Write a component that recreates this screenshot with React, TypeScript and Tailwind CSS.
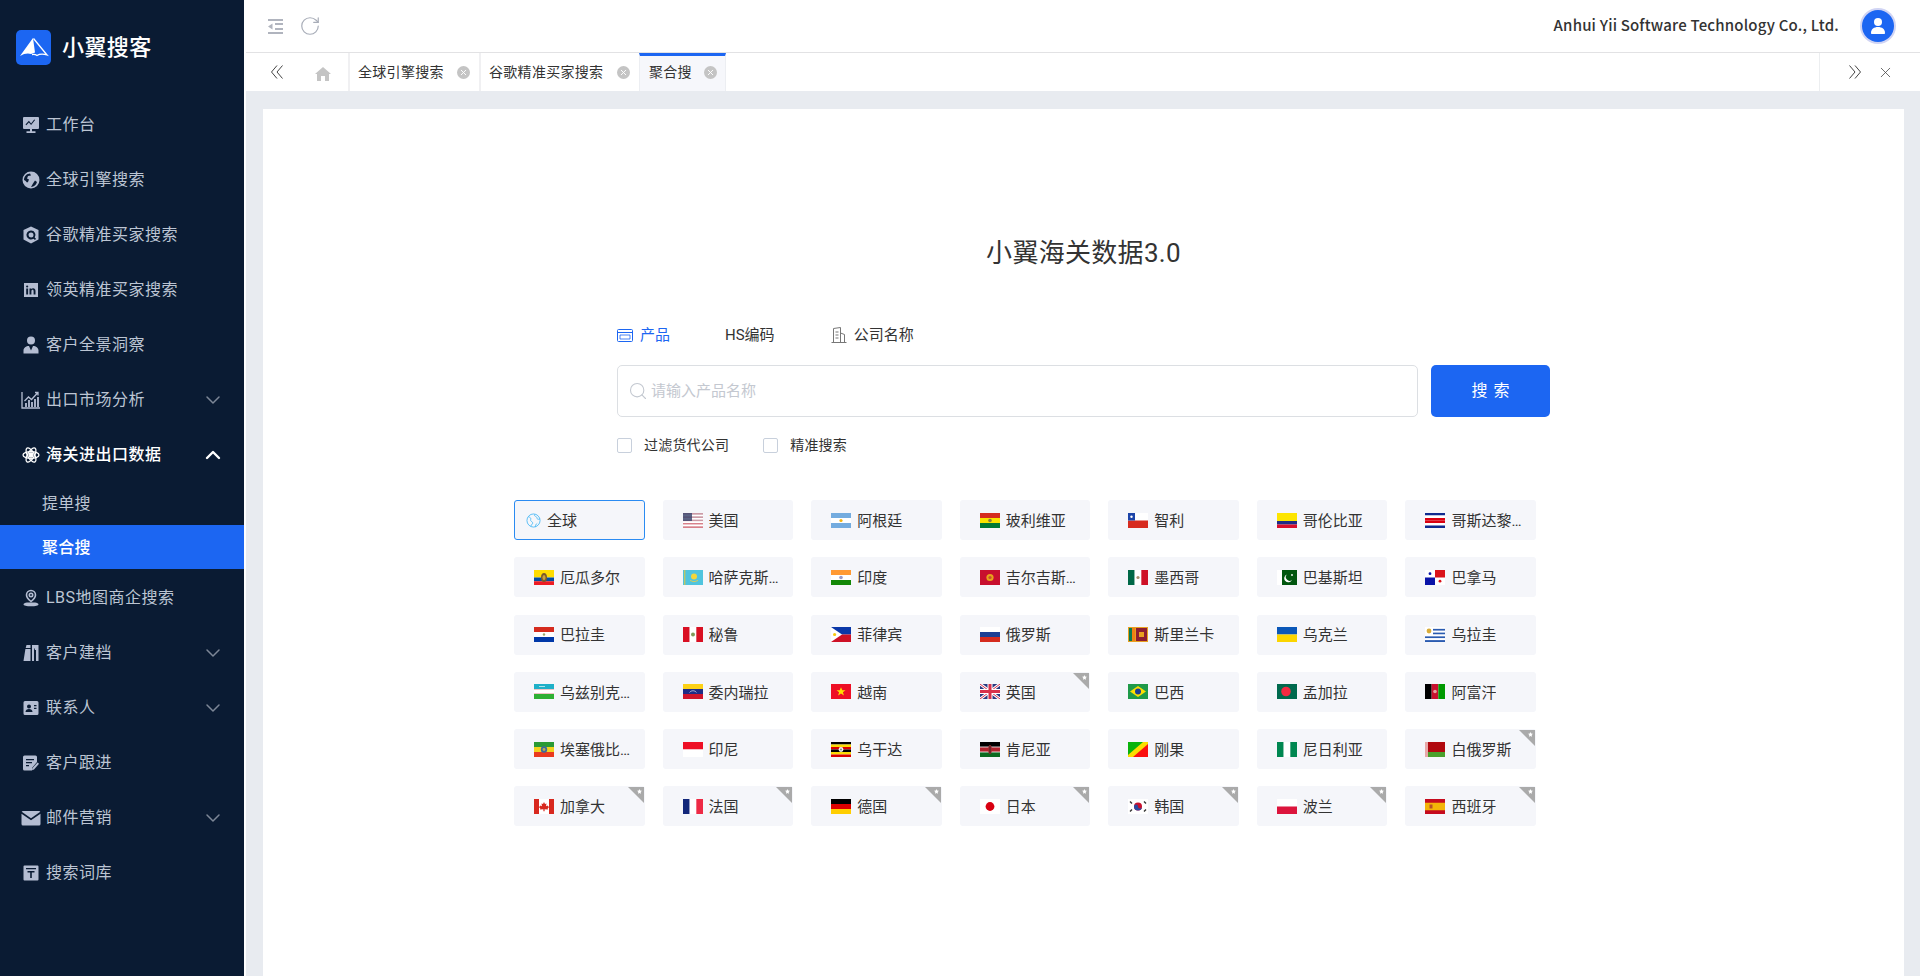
import { ChevronDown, ChevronUp, RotateCw, Search, X } from "lucide-react";
import type { ReactNode } from "react";

const FONT = "[font-family:Roboto,'Noto_Sans_CJK_SC',sans-serif]";

function Bands({ colors, vertical }: { colors: string[]; vertical?: boolean }) {
  const size = (vertical ? 20 : 15) / colors.length;
  return (
    <>
      {colors.map((c, i) =>
        vertical ? (
          <rect key={i} x={i * size} y="0" width={size} height="15" fill={c} />
        ) : (
          <rect key={i} x="0" y={i * size} width="20" height={size} fill={c} />
        ),
      )}
    </>
  );
}

const flags: Record<string, ReactNode> = {
  美国: (
    <>
      <Bands colors={["#d8808a", "#fff", "#d8808a", "#fff", "#d8808a", "#fff", "#d8808a", "#fff", "#d8808a"]} />
      <rect width="20" height="8" fill="#3f4b72" opacity="0.85" />
      <rect x="9" width="11" height="8" fill="#e9aeb3" opacity="0.8" />
      <rect y="1.7" x="9" width="11" height="1.6" fill="#fff" />
      <rect y="5" x="9" width="11" height="1.6" fill="#fff" />
    </>
  ),
  阿根廷: (
    <>
      <Bands colors={["#74acdf", "#fff", "#74acdf"]} />
      <circle cx="10" cy="7.5" r="1.6" fill="#f6b40e" />
    </>
  ),
  玻利维亚: (
    <>
      <Bands colors={["#d52b1e", "#f9e300", "#007934"]} />
      <circle cx="10" cy="7.5" r="1.8" fill="#8a7a3a" />
    </>
  ),
  智利: (
    <>
      <rect width="20" height="7.5" fill="#fff" />
      <rect y="7.5" width="20" height="7.5" fill="#d72b1f" />
      <rect width="7" height="7.5" fill="#1c44a8" />
      <circle cx="3.5" cy="3.7" r="1.2" fill="#fff" />
    </>
  ),
  哥伦比亚: (
    <>
      <rect width="20" height="8" fill="#fde500" />
      <rect y="8" width="20" height="3.5" fill="#1f2c86" />
      <rect y="11.5" width="20" height="3.5" fill="#d90f2c" />
    </>
  ),
  哥斯达黎加: <Bands colors={["#0f2a8f", "#fff", "#da0010", "#da0010", "#fff", "#0f2a8f"]} />,
  厄瓜多尔: (
    <>
      <rect width="20" height="7.5" fill="#ffdd00" />
      <rect y="7.5" width="20" height="3.75" fill="#034ea2" />
      <rect y="11.25" width="20" height="3.75" fill="#ed1c24" />
      <ellipse cx="10" cy="7.5" rx="3" ry="4.5" fill="#7a5a2a" />
      <ellipse cx="10" cy="7.5" rx="1.5" ry="2.5" fill="#c9a23c" />
    </>
  ),
  哈萨克斯坦: (
    <>
      <rect width="20" height="15" fill="#4fc4de" />
      <rect x="1" width="1.4" height="15" fill="#b9c76a" />
      <circle cx="11" cy="6.5" r="3" fill="#f2d63a" />
      <path d="M7 10.5q4 2.5 8 0" stroke="#d9cf58" fill="none" />
    </>
  ),
  印度: (
    <>
      <Bands colors={["#ff9933", "#fff", "#138808"]} />
      <circle cx="10" cy="7.5" r="1.8" fill="#9a9ac8" />
    </>
  ),
  吉尔吉斯斯坦: (
    <>
      <rect width="20" height="15" fill="#c8102e" />
      <circle cx="10" cy="7.5" r="3.6" fill="#e9a21a" />
      <circle cx="10" cy="7.5" r="1.6" fill="#c8502e" />
    </>
  ),
  墨西哥: (
    <>
      <Bands vertical colors={["#006847", "#fff", "#ce1126"]} />
      <circle cx="10" cy="7.5" r="1.6" fill="#a89070" />
    </>
  ),
  巴基斯坦: (
    <>
      <rect width="20" height="15" fill="#01560f" />
      <rect width="5" height="15" fill="#fff" />
      <path d="M10 4.5a4 4 0 1 0 5 5.2a3.3 3.3 0 1 1 -5 -5.2z" fill="#fff" />
      <circle cx="15" cy="5" r="0.9" fill="#fff" />
    </>
  ),
  巴拿马: (
    <>
      <rect width="20" height="15" fill="#fff" />
      <rect x="10" width="10" height="7.5" fill="#da121a" />
      <rect y="7.5" width="10" height="7.5" fill="#0a14a8" />
      <circle cx="5" cy="3.7" r="1.4" fill="#0a14a8" />
      <circle cx="15" cy="11.2" r="1.4" fill="#da121a" />
    </>
  ),
  巴拉圭: (
    <>
      <Bands colors={["#d52b1e", "#fff", "#0038a8"]} />
      <circle cx="10" cy="7.5" r="1.2" fill="#9aa86a" />
    </>
  ),
  秘鲁: (
    <>
      <Bands vertical colors={["#d91023", "#fff", "#d91023"]} />
      <circle cx="10" cy="7.5" r="2" fill="#7f9a5a" />
    </>
  ),
  菲律宾: (
    <>
      <rect width="20" height="7.5" fill="#0b38a8" />
      <rect y="7.5" width="20" height="7.5" fill="#ce1126" />
      <path d="M0 0L11 7.5L0 15z" fill="#fff" />
      <circle cx="3.6" cy="7.5" r="1.6" fill="#f6c90e" />
    </>
  ),
  俄罗斯: <Bands colors={["#fff", "#1c3f94", "#d52b1e"]} />,
  斯里兰卡: (
    <>
      <rect width="20" height="15" fill="#e8a020" />
      <rect x="1" y="1" width="3" height="13" fill="#0a7a50" />
      <rect x="4" y="1" width="3" height="13" fill="#f07f14" />
      <rect x="8" y="1" width="11" height="13" fill="#8d1d31" />
      <rect x="11" y="5" width="5" height="5" fill="#e8a020" />
    </>
  ),
  乌克兰: <Bands colors={["#0a57b8", "#fbd500"]} />,
  乌拉圭: (
    <>
      <Bands colors={["#fff", "#2a5bb0", "#fff", "#2a5bb0", "#fff", "#2a5bb0", "#fff", "#2a5bb0"]} />
      <rect width="8" height="8" fill="#fff" />
      <circle cx="4" cy="4" r="2.4" fill="#d8ac3a" />
    </>
  ),
  乌兹别克斯坦: (
    <>
      <rect width="20" height="5" fill="#1eb0c8" />
      <rect y="5" width="20" height="5" fill="#fff" />
      <rect y="5" width="20" height="0.5" fill="#d88" />
      <rect y="9.5" width="20" height="0.5" fill="#d88" />
      <rect y="10" width="20" height="5" fill="#2eb034" />
      <rect x="5" y="2" width="6" height="0.8" fill="#fff" opacity="0.8" />
    </>
  ),
  委内瑞拉: (
    <>
      <Bands colors={["#fcd116", "#1f2c86", "#cf142b"]} />
      <path d="M6.5 8.5a4 3.5 0 0 1 7 0" stroke="#dde" strokeWidth="0.7" fill="none" />
    </>
  ),
  越南: (
    <>
      <rect width="20" height="15" fill="#ee0f25" />
      <path d="M10 3.2l1.3 3h3.2l-2.6 2 1 3.3-2.9-2-2.9 2 1-3.3-2.6-2h3.2z" fill="#ffe000" />
    </>
  ),
  英国: (
    <>
      <rect width="20" height="15" fill="#2b3a80" />
      <path d="M0 0L20 15M20 0L0 15" stroke="#fff" strokeWidth="3" />
      <path d="M0 0L20 15M20 0L0 15" stroke="#d8304a" strokeWidth="1" />
      <path d="M10 0V15M0 7.5H20" stroke="#fff" strokeWidth="5" />
      <path d="M10 0V15M0 7.5H20" stroke="#d8304a" strokeWidth="3" />
    </>
  ),
  巴西: (
    <>
      <rect width="20" height="15" fill="#1f9a49" />
      <path d="M10 2L18 7.5L10 13L2 7.5z" fill="#fedf00" />
      <circle cx="10" cy="7.5" r="3" fill="#1c3f94" />
    </>
  ),
  孟加拉: (
    <>
      <rect width="20" height="15" fill="#006a4e" />
      <circle cx="9" cy="7.5" r="4.8" fill="#f42a41" />
    </>
  ),
  阿富汗: (
    <>
      <Bands vertical colors={["#000", "#c8102e", "#009a00"]} />
      <circle cx="10" cy="7.5" r="1.8" fill="#e8a0a0" />
    </>
  ),
  埃塞俄比亚: (
    <>
      <Bands colors={["#2a9a34", "#f2d21e", "#ea3a1e"]} />
      <circle cx="10" cy="7.5" r="3.2" fill="#3d6a9a" />
      <circle cx="10" cy="7.5" r="1.4" fill="#b8b050" />
    </>
  ),
  印尼: <Bands colors={["#ee0f25", "#fff"]} />,
  乌干达: (
    <>
      <Bands colors={["#000", "#fcdc04", "#d90000", "#000", "#fcdc04", "#d90000"]} />
      <circle cx="10" cy="7.5" r="2.4" fill="#f2f2f2" />
      <circle cx="10" cy="7.5" r="0.9" fill="#777" />
    </>
  ),
  肯尼亚: (
    <>
      <rect width="20" height="5" fill="#000" />
      <rect y="5" width="20" height="5" fill="#b0212c" />
      <rect y="10" width="20" height="5" fill="#0a6a20" />
      <rect y="4.6" width="20" height="0.8" fill="#fff" />
      <rect y="9.6" width="20" height="0.8" fill="#fff" />
      <ellipse cx="10" cy="7.5" rx="1.8" ry="4.5" fill="#a32a30" />
      <rect x="9.6" y="3.5" width="0.8" height="8" fill="#222" />
    </>
  ),
  刚果: (
    <>
      <rect width="20" height="15" fill="#fbde00" />
      <path d="M0 0H15L0 13z" fill="#09b30c" />
      <path d="M20 15H5L20 2z" fill="#fb0f0f" />
    </>
  ),
  尼日利亚: <Bands vertical colors={["#008751", "#fff", "#008751"]} />,
  白俄罗斯: (
    <>
      <rect width="20" height="10" fill="#b0090f" />
      <rect y="10" width="20" height="5" fill="#4aa02c" />
      <rect width="3" height="15" fill="#e8a8a8" />
    </>
  ),
  加拿大: (
    <>
      <Bands vertical colors={["#d8281e", "#fff", "#fff", "#d8281e"]} />
      <path d="M10 3l1 2 1.5-.6-.5 2.8 1.7-.8.4 1.2 1.2.2-1.6 1.7.3 1-3.4-.3v2h-1.2v-2l-3.4.3.3-1-1.6-1.7 1.2-.2.4-1.2 1.7.8-.5-2.8 1.5.6z" fill="#d8281e" />
    </>
  ),
  法国: <Bands vertical colors={["#12277a", "#fff", "#ee2a45"]} />,
  德国: <Bands colors={["#000", "#dd0000", "#ffce00"]} />,
  日本: (
    <>
      <rect width="20" height="15" fill="#fff" />
      <circle cx="10" cy="7.5" r="4.4" fill="#d80010" />
    </>
  ),
  韩国: (
    <>
      <rect width="20" height="15" fill="#fff" />
      <circle cx="10" cy="7.5" r="4" fill="#c8102e" />
      <path d="M6 7.5a2 2 0 0 1 4 0a2 2 0 0 0 4 0a4 4 0 0 1 -8 0z" fill="#2a4aa0" />
      <path d="M2 2.5l2 2M16 2.5l2 2M2 12.5l2-2M16 12.5l2-2" stroke="#333" strokeWidth="1.4" />
    </>
  ),
  波兰: <Bands colors={["#fff", "#dc143c"]} />,
  西班牙: (
    <>
      <rect width="20" height="15" fill="#c60b1e" />
      <rect y="3.75" width="20" height="7.5" fill="#f3b408" />
      <rect x="4.5" y="5.5" width="3" height="4" fill="#b8502a" />
    </>
  ),
};

const countries = [
  "美国", "阿根廷", "玻利维亚", "智利", "哥伦比亚", "哥斯达黎加",
  "厄瓜多尔", "哈萨克斯坦", "印度", "吉尔吉斯斯坦", "墨西哥", "巴基斯坦", "巴拿马",
  "巴拉圭", "秘鲁", "菲律宾", "俄罗斯", "斯里兰卡", "乌克兰", "乌拉圭",
  "乌兹别克斯坦", "委内瑞拉", "越南", "英国", "巴西", "孟加拉", "阿富汗",
  "埃塞俄比亚", "印尼", "乌干达", "肯尼亚", "刚果", "尼日利亚", "白俄罗斯",
  "加拿大", "法国", "德国", "日本", "韩国", "波兰", "西班牙",
];

const tagged = ["英国", "白俄罗斯", "加拿大", "法国", "德国", "日本", "韩国", "波兰", "西班牙"];

function CountryChip({ name }: { name: string }) {
  return (
    <div className="relative flex h-10 items-center rounded-[3px] bg-[#f5f6fa] pl-5 text-[15px] text-[#333]">
      <svg viewBox="0 0 20 15" className="h-[15px] w-5 shrink-0">
        {flags[name]}
      </svg>
      <span className="ml-[6px] max-w-[74px] truncate pt-[2px]">{name}</span>
      {tagged.includes(name) && (
        <svg viewBox="0 0 16 16" className="absolute right-[1px] top-[1px] h-4 w-4">
          <path d="M0 0H16V16z" fill="#aaa" />
          <path d="M11.5 2l.7 1.600 1.700.2-1.200 1.200.3 1.700-1.500-.8-1.500.8.300-1.700-1.200-1.200 1.700-.2z" fill="#fff" />
        </svg>
      )}
    </div>
  );
}

const iconClass = "h-[18px] w-[18px]";

const navIcons: Record<string, ReactNode> = {
  monitor: (
    <svg viewBox="0 0 18 18" className={iconClass} fill="currentColor">
      <path fillRule="evenodd" d="M2 1h14a1 1 0 0 1 1 1v10a1 1 0 0 1-1 1H2a1 1 0 0 1-1-1V2a1 1 0 0 1 1-1zm1.5 7.5l.8.8 2.6-2.8 2.2 2.6 4-5-.9-.7-3.1 4-2.2-2.6z" />
      <path d="M8 13h2v2.2h3.5V17h-9v-1.8H8z" />
    </svg>
  ),
  globe: (
    <svg viewBox="0 0 18 18" className={iconClass} fill="currentColor">
      <path fillRule="evenodd" d="M9 .5a8.5 8.5 0 1 1 0 17a8.5 8.5 0 0 1 0-17zM5 3.2A7 7 0 0 0 2 9c1.5.5 2 1.5 3 2.5l1-.5 1-2.5-2-1 1-2.5 3-.5-1-2zm6 9.3l-2 3.5a7 7 0 0 0 6-5l-2-1.5z" />
    </svg>
  ),
  shield: (
    <svg viewBox="0 0 18 18" className={iconClass} fill="currentColor">
      <path fillRule="evenodd" d="M9 .5l7.500 3.500v9.500L9 17.500 1.500 13.500V4zM9 4.500a4.500 4.500 0 1 0 2.500 8.200l1.500 1.300 1-1.200-1.300-1.200A4.500 4.500 0 0 0 9 4.500zm0 2a2.500 2.500 0 1 1 0 5a2.500 2.500 0 0 1 0-5z" />
    </svg>
  ),
  linkedin: (
    <svg viewBox="0 0 18 18" className={iconClass} fill="currentColor">
      <path fillRule="evenodd" d="M2 2h14v14H2zm2.200 5.500v6h1.900v-6zM5.150 4.400a1.100 1.100 0 1 0 0 2.200a1.100 1.100 0 0 0 0-2.200zM7.500 7.500v6h1.900v-3.200c0-1 .5-1.500 1.200-1.500s1 .5 1 1.500v3.200h1.900V10c0-1.800-1-2.700-2.300-2.700-.9 0-1.500.4-1.800 1V7.500z" />
    </svg>
  ),
  person: (
    <svg viewBox="0 0 18 18" className={iconClass} fill="currentColor">
      <circle cx="9" cy="4.5" r="4" />
      <path d="M1.500 17.500v-3c0-2.500 2.500-4.500 5.500-4.500l2 4.500 2-4.500c3 0 5.500 2 5.500 4.500v3z" />
    </svg>
  ),
  chart: (
    <svg viewBox="0 0 20 18" className="h-[18px] w-5" fill="none" stroke="currentColor" strokeWidth="1.3">
      <path d="M1 1v16h18" />
      <path d="M3.500 10l4-4 3 2.500 6-6.500M14 1.500h3v3" />
      <path d="M5 16v-4M8 16V9M11 16v-5M14 16V8M17 16V6" strokeWidth="1.8" />
    </svg>
  ),
  atom: (
    <svg viewBox="0 0 18 18" className={iconClass} fill="none" stroke="currentColor" strokeWidth="1.3">
      <ellipse cx="9" cy="9" rx="8" ry="3.4" />
      <ellipse cx="9" cy="9" rx="8" ry="3.4" transform="rotate(60 9 9)" />
      <ellipse cx="9" cy="9" rx="8" ry="3.4" transform="rotate(120 9 9)" />
      <circle cx="9" cy="9" r="2" fill="currentColor" />
    </svg>
  ),
  pin: (
    <svg viewBox="0 0 18 18" className={iconClass} fill="none" stroke="currentColor" strokeWidth="1.6">
      <path d="M9 12.500C6.500 10.500 4.500 8.500 4.500 6a4.500 4.500 0 0 1 9 0c0 2.500-2 4.500-4.500 6.500z" />
      <circle cx="9" cy="6" r="1.7" />
      <path d="M5 13.500c-2 .4-3.500 1-3.500 2 0 1 3 1.800 7.500 1.800s7.500-.8 7.500-1.800c0-1-1.500-1.600-3.500-2" fill="currentColor" stroke="none" />
    </svg>
  ),
  books: (
    <svg viewBox="0 0 18 18" className={iconClass} fill="currentColor">
      <path d="M4.500 1h4v3H3.700zM3.400 5h5.100v12H1.500z" />
      <path d="M10 1h6.500v16H14V6h-1.200v-1.500h-.8V17h-2z" />
    </svg>
  ),
  contact: (
    <svg viewBox="0 0 18 18" className={iconClass} fill="currentColor">
      <path fillRule="evenodd" d="M3 2h12a1.500 1.500 0 0 1 1.500 1.500v11A1.500 1.500 0 0 1 15 16H3a1.500 1.500 0 0 1-1.500-1.500v-11A1.500 1.500 0 0 1 3 2zm4 3.500a2 2 0 1 0 0 4a2 2 0 0 0 0-4zM3.500 13h7c0-1.800-1.500-3-3.500-3s-3.500 1.200-3.500 3zM12 6v1.300h2.500V6zm0 2.700V10h2.500V8.700z" />
    </svg>
  ),
  note: (
    <svg viewBox="0 0 18 18" className={iconClass} fill="currentColor">
      <path fillRule="evenodd" d="M2.500 1.500h11a1.500 1.500 0 0 1 1.500 1.500v5l-5 6v2.500H2.500A1.500 1.500 0 0 1 1 15V3a1.500 1.500 0 0 1 1.500-1.500zM4 5v1.300h8V5zm0 3v1.300h6V8zm0 3v1.300h3V11z" />
      <path d="M15.500 8.500l1.500 1.300-5 5.700-2 .7.300-2z" />
    </svg>
  ),
  mail: (
    <svg viewBox="0 0 20 18" className="h-[18px] w-5" fill="currentColor">
      <path d="M2 2h16a1.500 1.500 0 0 1 1.300.8L10 9.200.7 2.800A1.500 1.500 0 0 1 2 2z" />
      <path d="M.5 4.700l9.500 6.500 9.500-6.500v10.300A1.500 1.500 0 0 1 18 16.500H2A1.500 1.500 0 0 1 .5 15z" />
    </svg>
  ),
  term: (
    <svg viewBox="0 0 18 18" className={iconClass} fill="currentColor">
      <path fillRule="evenodd" d="M2.500 1.500h13a1 1 0 0 1 1 1v13a1 1 0 0 1-1 1h-13a1 1 0 0 1-1-1v-13a1 1 0 0 1 1-1zM4 4v1.300h10V4zm1.500 3v1.500h2.700V14h1.600V8.500h2.700V7z" />
    </svg>
  ),
};

type NavItem = { label: string; icon: string; caret?: "down" | "up" };

const navTop: NavItem[] = [
  { label: "工作台", icon: "monitor" },
  { label: "全球引擎搜索", icon: "globe" },
  { label: "谷歌精准买家搜索", icon: "shield" },
  { label: "领英精准买家搜索", icon: "linkedin" },
  { label: "客户全景洞察", icon: "person" },
  { label: "出口市场分析", icon: "chart", caret: "down" },
];

const navBottom: NavItem[] = [
  { label: "LBS地图商企搜索", icon: "pin" },
  { label: "客户建档", icon: "books", caret: "down" },
  { label: "联系人", icon: "contact", caret: "down" },
  { label: "客户跟进", icon: "note" },
  { label: "邮件营销", icon: "mail", caret: "down" },
  { label: "搜索词库", icon: "term" },
];

function NavRow({ item, active }: { item: NavItem; active?: boolean }) {
  return (
    <div className={`flex h-[55px] items-center pr-[19px] pt-[3px] text-base tracking-[0.5px] ${active ? "font-medium text-white" : "text-[#bcc5d3]"}`}>
      <span className={`flex w-[46px] shrink-0 justify-center pl-[15px] ${active ? "text-white" : "text-[#b4bdd2]"}`}>
        {navIcons[item.icon]}
      </span>
      <span className="flex-1">{item.label}</span>
      {item.caret === "down" && <ChevronDown size={24} strokeWidth={1.5} className="text-[#7d8797]" />}
      {item.caret === "up" && <ChevronUp size={24} strokeWidth={2.4} className="text-white" />}
    </div>
  );
}

function Sidebar() {
  return (
    <aside className="h-full w-[244px] shrink-0 bg-[#0a1b33]">
      <div className="flex h-[95.5px] items-center pl-4">
        <div className="h-[35px] w-[35px] rounded-[5px] bg-[#1c66f2]">
          <svg viewBox="0 0 35 35" className="h-[35px] w-[35px]">
            <path d="M17 8L4 26Q10 22.500 15 24L19 22.500z" fill="#fff" />
            <path d="M17.500 8.500L31 25Q25 23 21 25.500Q19 24 16 24.500" fill="none" stroke="#fff" strokeWidth="1.3" />
          </svg>
        </div>
        <span className="ml-[11px] text-[22px] font-medium tracking-[0.4px] text-white">小翼搜客</span>
      </div>
      {navTop.map((item) => (
        <NavRow key={item.label} item={item} />
      ))}
      <NavRow item={{ label: "海关进出口数据", icon: "atom", caret: "up" }} active />
      <div className="flex h-11 items-center pl-[42px] pt-[2px] text-base tracking-[0.2px] text-[#bcc5d3]">提单搜</div>
      <div className="flex h-11 items-center bg-[#1c66f2] pl-[42px] pt-[2px] text-base font-medium tracking-[0.2px] text-white">聚合搜</div>
      {navBottom.map((item) => (
        <NavRow key={item.label} item={item} />
      ))}
    </aside>
  );
}

function DoubleChevron({ right }: { right?: boolean }) {
  return (
    <svg viewBox="0 0 12 14" className="h-[14px] w-3 text-[#444]" fill="none" stroke="currentColor">
      <path d={right ? "M0.500 0.500L6 7L0.500 13.500M6 0.500L11.500 7L6 13.500" : "M6 0.500L0.500 7L6 13.500M11.500 0.500L6 7L11.500 13.500"} />
    </svg>
  );
}

function TabClose() {
  return (
    <span className="flex h-[13px] w-[13px] items-center justify-center rounded-full bg-[#c4c4c4]">
      <X size={9} strokeWidth={2.5} className="text-white" />
    </span>
  );
}

function Header() {
  return (
    <>
      <div className="flex h-[53px] shrink-0 items-center border-b border-[#e2e2e4] bg-white pl-[22px] pr-[26px]">
        <svg viewBox="0 0 15 15" className="h-[15px] w-[15px] text-[#b0b4be]" fill="currentColor">
          <path d="M0 0h15v2H0zM7 4h8v2H7zM7 9h8v2H7zM0 13h15v2H0zM4.500 4.500v6L0 7.500z" />
        </svg>
        <RotateCw size={22} strokeWidth={1.3} className="ml-4 text-[#a8adb8]" />
        <span className="ml-auto pb-[1px] text-[15px] font-medium tracking-[0.18px] text-[#333] [font-family:'Noto_Sans_CJK_SC',sans-serif]">Anhui Yii Software Technology Co., Ltd.</span>
        <div className="ml-[23px] flex h-8 w-8 items-center justify-center rounded-full bg-[#1c66f2] ring-[2px] ring-[#d0d4f4]">
          <svg viewBox="0 0 20 20" className="h-5 w-5" fill="#fff">
            <circle cx="10" cy="6" r="4" />
            <path d="M3 17c0-4 3-6 7-6s7 2 7 6c0 .6-.4 1-1 1H4c-.6 0-1-.400-1-1z" />
          </svg>
        </div>
      </div>
      <div className="flex h-[38px] shrink-0 items-stretch bg-white text-sm tracking-[0.3px] text-[#333]">
        <div className="flex w-[102px] items-center pl-[25px]">
          <DoubleChevron />
          <svg viewBox="0 0 16 14" className="ml-8 mt-1 h-[14px] w-4" fill="#c4c4c4">
            <path d="M8 0L16 7h-2v7h-4V9H6v5H2V7H0z" />
          </svg>
        </div>
        <div className="flex w-[131px] items-center justify-between border-l-2 border-[#f0f0f2] pl-2 pr-[9px]">
          <span>全球引擎搜索</span>
          <TabClose />
        </div>
        <div className="flex w-[160px] items-center justify-between border-l-2 border-[#f0f0f2] pl-2 pr-[9px]">
          <span>谷歌精准买家搜索</span>
          <TabClose />
        </div>
        <div className="flex w-[87px] items-center justify-between border-x border-[#eceef2] border-t-[3px] border-t-[#1c66f2] bg-[#f6f7fb] pb-[3px] pl-[9px] pr-2">
          <span>聚合搜</span>
          <TabClose />
        </div>
        <div className="ml-auto flex w-[101px] items-center border-l border-[#eceef0] pl-[29px] pr-[26px]">
          <DoubleChevron right />
          <X size={17} strokeWidth={1.1} className="ml-auto text-[#444]" />
        </div>
      </div>
    </>
  );
}

function SearchPanel() {
  return (
    <div className="w-[933px] text-sm text-[#333]">
      <div className="flex h-6 items-center text-[15px]">
        <svg viewBox="0 0 16 13" className="h-[13px] w-4 text-[#1c66f2]" fill="none" stroke="currentColor">
          <rect x="0.5" y="0.5" width="15" height="12" rx="1" />
          <path d="M1 3.500h14" />
          <path d="M3 6h10v4H3z" strokeWidth="0.8" />
        </svg>
        <span className="ml-[7px] pt-[2px] text-[#1c66f2]">产品</span>
        <span className="ml-[55px] pt-[2px]">HS编码</span>
        <svg viewBox="0 0 16 16" className="ml-[56px] h-4 w-4 text-[#777]" fill="none" stroke="currentColor">
          <path d="M2.500 15.500V1.500L9.500 .5V15.500M9.500 6l4 1.500v8M.5 15.500h15" />
          <path d="M4.500 5h3M4.500 8h3M4.500 11h3" />
        </svg>
        <span className="ml-[7px] pt-[2px]">公司名称</span>
      </div>
      <div className="mt-[18px] flex gap-[13px]">
        <div className="flex h-[52px] flex-1 items-center rounded-[5px] border border-[#dcdfe3] pl-[10px]">
          <Search size={20} strokeWidth={1.3} className="text-[#c3c8d0]" />
          <span className="ml-[3px] pt-[2px] text-[15px] text-[#c4c8d0]">请输入产品名称</span>
        </div>
        <button className="h-[52px] w-[119px] rounded-[5px] bg-[#1c66f2] pl-[6px] text-base tracking-[6px] text-white">搜索</button>
      </div>
      <div className="mt-[18px] flex h-5 items-center tracking-[0.2px]">
        <span className="h-[15px] w-[15px] rounded-[2px] border border-[#c8d0dc] bg-white" />
        <span className="ml-3">过滤货代公司</span>
        <span className="ml-[34px] h-[15px] w-[15px] rounded-[2px] border border-[#c8d0dc] bg-white" />
        <span className="ml-3">精准搜索</span>
      </div>
    </div>
  );
}

function CountryGrid() {
  return (
    <div className="mt-[45px] w-[1139px] pr-[117px]">
      <div className="grid grid-cols-7 gap-x-[18px] gap-y-[17.3px]">
        <div className="flex h-10 items-center rounded-[3px] border border-[#2a8bf2] bg-[#f5f6fa] pl-[11px] text-[15px] text-[#333]">
          <svg viewBox="0 0 16 16" className="h-[15px] w-[15px] text-[#55bdf5]" fill="none" stroke="currentColor">
            <circle cx="8" cy="8" r="7" />
            <path d="M2.500 4c2 .5 3 1.500 2.500 3s1 2 2 3-1 2-2 4M9 1.500c-.5 1.500 1 2 2 2.500s0 2 1.500 2.500 1.500 0 2.500-.5M10 15c0-2 .5-3 2-4" />
          </svg>
          <span className="ml-[6px] pt-[2px]">全球</span>
        </div>
        {countries.map((name) => (
          <CountryChip key={name} name={name} />
        ))}
      </div>
    </div>
  );
}

export default function App() {
  return (
    <div className={`flex h-screen w-full overflow-hidden bg-white ${FONT}`}>
      <Sidebar />
      <div className="ml-[2px] flex min-w-0 flex-1 flex-col">
        <Header />
        <main className="flex min-h-0 flex-1 flex-col bg-[#e8ebf0] pl-[17px] pr-4 pt-[18px]">
          <div className="flex flex-1 flex-col items-center bg-white pt-[125px]">
            <h1 className="pt-[2px] text-[26px] leading-[34px] tracking-[0.3px] text-[#333]">小翼海关数据3.0</h1>
            <div className="mt-[53px]">
              <SearchPanel />
            </div>
            <CountryGrid />
          </div>
        </main>
      </div>
    </div>
  );
}
